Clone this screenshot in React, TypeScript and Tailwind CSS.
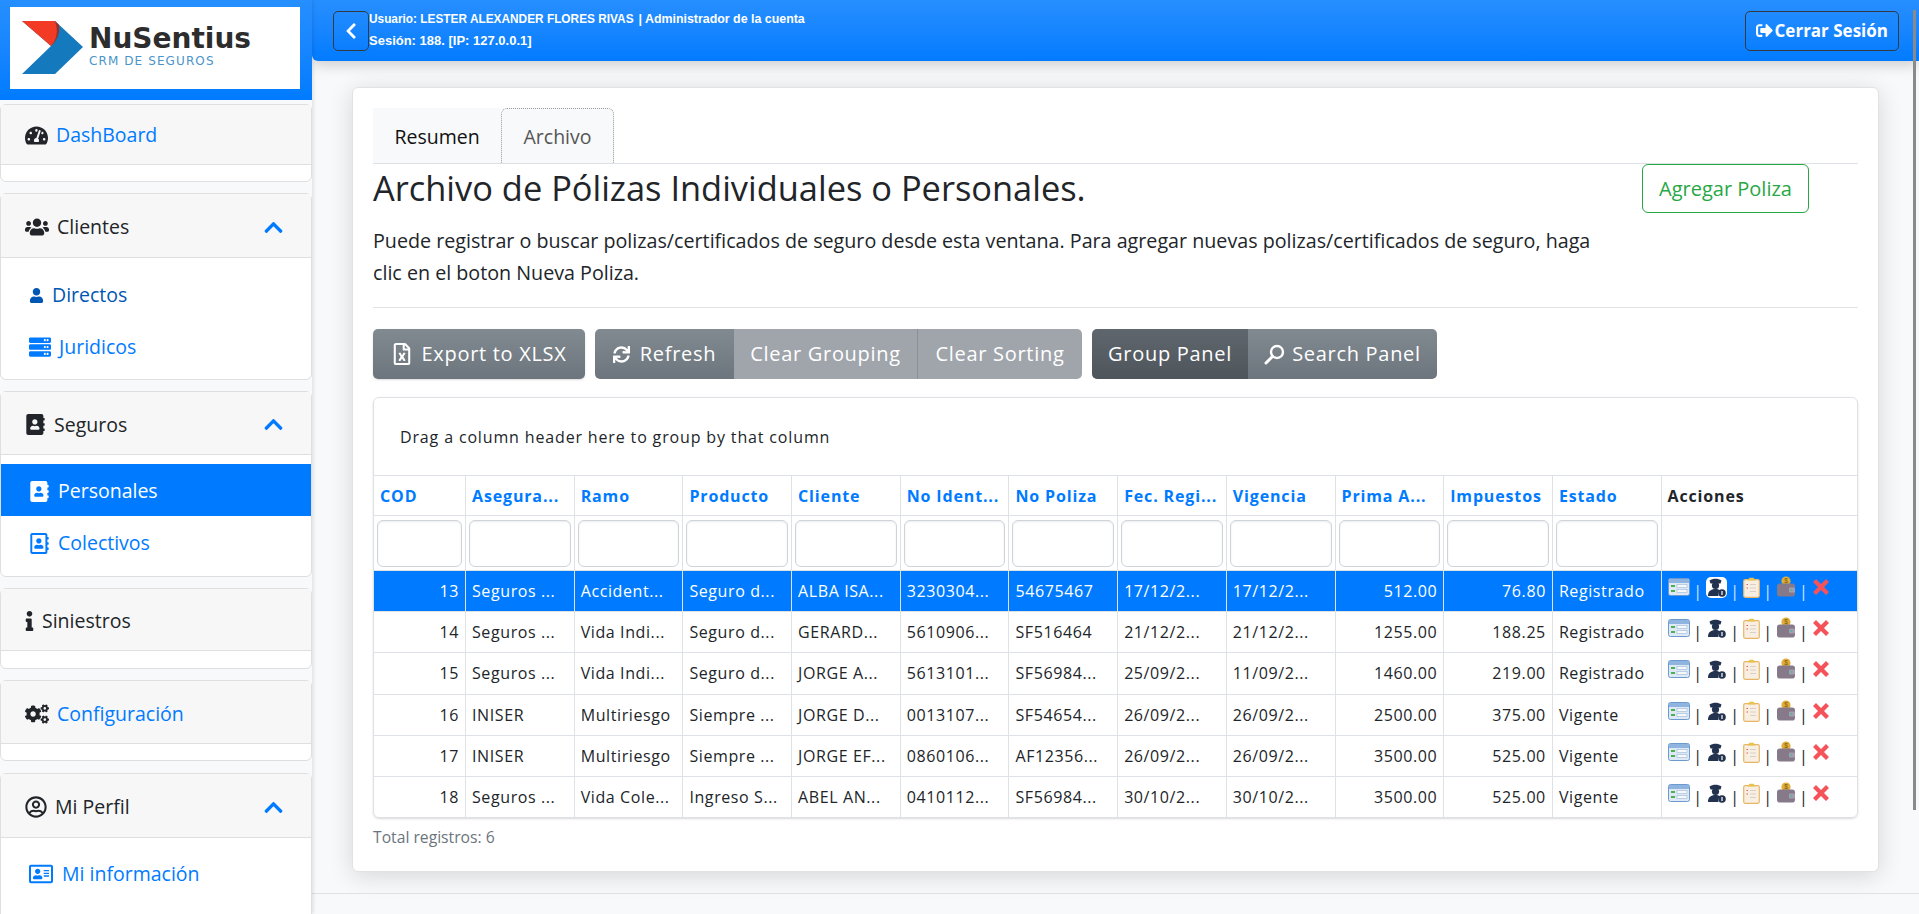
import React from "react";
import {
  FaTachometerAlt, FaUsers, FaUser, FaServer, FaAddressBook, FaRegAddressBook, FaInfo, FaCogs,
  FaRegUserCircle, FaRegAddressCard, FaChevronUp, FaChevronLeft, FaSignOutAlt, FaRegFileExcel, FaSync,
} from "react-icons/fa";

const FONT = "font-['Open_Sans','Noto_Sans',sans-serif]";

function Logo() {
  return (
    <div className="flex h-[82px] w-[290px] items-center bg-white pl-[12px]">
      <svg width="62" height="54" viewBox="0 0 62 54" className="shrink-0">
        <path d="M0 0H33L61 26L33 53H0L29 25Z" fill="#1479bd" />
        <path d="M0 0H33C36 8 36 18 29 25Z" fill="#f33a24" />
        <path d="M29 25C36 18 36 8 33 0L37 4C38 12 35 20 29 25Z" fill="#a82a1c" />
      </svg>
      <div className="ml-[5px] -mt-[3px] flex flex-col">
        <span className="font-['DejaVu_Sans',sans-serif] text-[28px] leading-[30px] font-bold text-[#2d2d2d]">NuSentius</span>
        <span className="font-['DejaVu_Sans',sans-serif] text-[12px] leading-[15px] tracking-[1.1px] text-[#4a94c8]">CRM DE SEGUROS</span>
      </div>
    </div>
  );
}

function SideCard({ icon, title, link, open, mb, headH, children, bodyH, pt = "pt-[3px]" }: { icon: React.ReactNode; title: string; link?: boolean; open?: boolean; mb: string; headH: string; bodyH?: string; children?: React.ReactNode; pt?: string }) {
  return (
    <div className={`${mb} rounded-[6px] border border-[#dfdfdf] bg-white`}>
      <div className={`${headH} ${pt} flex items-center justify-between border-b border-[#dfdfdf] bg-[#f7f7f7] pr-[27px] pl-[24px]`}>
        <div className="flex items-center gap-[8px]">
          <span className="flex items-center text-[#212529]">{icon}</span>
          <span className={`text-[19.5px] ${link ? "text-[#007bff]" : "text-[#212529]"}`}>{title}</span>
        </div>
        {open && <FaChevronUp className="text-[21px] text-[#007bff]" />}
      </div>
      <div className={bodyH}>{children}</div>
    </div>
  );
}

function SideItem({ icon, label, active, dark, gap = "gap-[8px]" }: { icon: React.ReactNode; label: string; active?: boolean; dark?: boolean; gap?: string }) {
  return (
    <div className={`flex h-[52px] items-center ${gap} pt-[2px] pl-[28px] text-[19.5px] ${active ? "bg-[#007bff] text-white" : dark ? "text-[#0056b3]" : "text-[#007bff]"}`}>
      <span className="flex items-center">{icon}</span>
      <span>{label}</span>
    </div>
  );
}

function CardIcon() {
  return (
    <svg width="22" height="18" viewBox="0 0 22 18">
      <rect x="0.5" y="0.5" width="21" height="17" rx="2" fill="#dfe9f5" stroke="#6d9ace" />
      <rect x="1" y="1" width="20" height="4" fill="#8fb4e0" />
      <rect x="3" y="7" width="4" height="2" fill="#4caf50" />
      <rect x="3" y="12" width="4" height="2" fill="#4caf50" />
      <rect x="9" y="6.5" width="10" height="3" fill="#f5f9fd" stroke="#9db8d4" strokeWidth="0.6" />
      <rect x="9" y="11.5" width="10" height="3" fill="#f5f9fd" stroke="#9db8d4" strokeWidth="0.6" />
    </svg>
  );
}
function AgentIcon({ selected }: { selected?: boolean }) {
  return (
    <span className={`flex h-[21px] w-[21px] items-center justify-center rounded-[5px] ${selected ? "bg-white" : ""}`}>
      <svg width="19" height="19" viewBox="0 0 19 19">
        <path d="M2.5 2.5C6 0 11 0 14.5 2.5L13.5 5.5H3.5Z" fill="#22324f" />
        <circle cx="8.5" cy="7.5" r="3.6" fill="#22324f" />
        <path d="M1 18C1 13 4 11 8.5 11C11 11 12 11.5 13 12.5C11 14 11 16.5 11.5 18Z" fill="#22324f" />
        <circle cx="15" cy="15" r="3.8" fill="#22324f" />
        <rect x="14.4" y="13" width="1.2" height="4" fill="#fff" />
      </svg>
    </span>
  );
}
function ClipIcon() {
  return (
    <svg width="17" height="21" viewBox="0 0 17 21">
      <rect x="0.7" y="2.7" width="15.6" height="17.6" rx="1.5" fill="#f8efe2" stroke="#e8b566" strokeWidth="1.2" />
      <path d="M4.5 3.5L6.5 0.8H10.5L12.5 3.5Z" fill="#e8c14f" />
      <path d="M3.5 7.5H5M3.5 11H5" stroke="#e45b55" strokeWidth="1.2" />
      <path d="M7 7.5H13M7 11H13M7 14.5H13" stroke="#d8d0c8" strokeWidth="1" />
    </svg>
  );
}
function WalletIcon() {
  return (
    <svg width="20" height="21" viewBox="0 0 20 21">
      <circle cx="10" cy="5" r="4.6" fill="#e0ad3a" />
      <text x="10" y="7.4" fontSize="6.5" textAnchor="middle" fill="#7a5a10" fontFamily="Liberation Sans">$</text>
      <rect x="1" y="7.5" width="18" height="13" rx="2.8" fill="#85798a" />
      <rect x="13" y="11.5" width="6" height="5" rx="1" fill="#a89dac" />
      <circle cx="15.5" cy="14" r="1" fill="#3dbfa5" />
    </svg>
  );
}
function XIcon() {
  return (
    <svg width="18" height="18" viewBox="0 0 18 18">
      <path d="M4 1L9 6L14 1L17 4L12 9L17 14L14 17L9 12L4 17L1 14L6 9L1 4Z" fill="#f4535a" />
    </svg>
  );
}
function SearchGlyph() {
  return (
    <svg width="21" height="21" viewBox="0 0 21 21" fill="none" stroke="#fff">
      <circle cx="13" cy="8" r="6" strokeWidth="2.4" />
      <path d="M8.5 12.5L2 19" strokeWidth="3" strokeLinecap="round" />
    </svg>
  );
}

function Actions({ selected }: { selected?: boolean }) {
  const sep = <span className={`${selected ? "text-[#cfe4ff]" : "text-[#212529]"} mt-[8px] text-[16px] leading-[24px]`}>|</span>;
  return (
    <div className="flex items-start gap-[3.6px] pl-[6px]">
      <span className="mt-[7px]"><CardIcon /></span>
      {sep}
      <span className="mt-[6px]"><AgentIcon selected={selected} /></span>
      {sep}
      <span className="mt-[6px]"><ClipIcon /></span>
      {sep}
      <span className="mt-[5px]"><WalletIcon /></span>
      {sep}
      <span className="mt-[7px]"><XIcon /></span>
    </div>
  );
}

const heads = ["COD", "Asegura...", "Ramo", "Producto", "Cliente", "No Ident...", "No Poliza", "Fec. Regi...", "Vigencia", "Prima A...", "Impuestos", "Estado"];
const rows = [
  ["13", "Seguros ...", "Accident...", "Seguro d...", "ALBA ISA...", "3230304...", "54675467", "17/12/2...", "17/12/2...", "512.00", "76.80", "Registrado"],
  ["14", "Seguros ...", "Vida Indi...", "Seguro d...", "GERARD...", "5610906...", "SF516464", "21/12/2...", "21/12/2...", "1255.00", "188.25", "Registrado"],
  ["15", "Seguros ...", "Vida Indi...", "Seguro d...", "JORGE A...", "5613101...", "SF56984...", "25/09/2...", "11/09/2...", "1460.00", "219.00", "Registrado"],
  ["16", "INISER", "Multiriesgo", "Siempre ...", "JORGE D...", "0013107...", "SF54654...", "26/09/2...", "26/09/2...", "2500.00", "375.00", "Vigente"],
  ["17", "INISER", "Multiriesgo", "Siempre ...", "JORGE EF...", "0860106...", "AF12356...", "26/09/2...", "26/09/2...", "3500.00", "525.00", "Vigente"],
  ["18", "Seguros ...", "Vida Cole...", "Ingreso S...", "ABEL AN...", "0410112...", "SF56984...", "30/10/2...", "30/10/2...", "3500.00", "525.00", "Vigente"],
];
const RIGHT = new Set([0, 9, 10]);
const GRID = "grid grid-cols-[92px_repeat(11,108.7px)_1fr]";

function Btn({ children, cls }: { children: React.ReactNode; cls: string }) {
  return <div className={`flex h-full items-center justify-center text-[20px] tracking-[0.7px] text-white ${cls}`}>{children}</div>;
}

export default function App() {
  return (
    <div className={`${FONT} relative flex h-[914px] w-full overflow-hidden bg-[#f8f9fa] text-[#212529]`}>
      <aside className="z-10 w-[312px] shrink-0 bg-[#f8f9fa] shadow-[1px_0_4px_rgba(0,0,0,0.12)]">
        <div className="h-[100px] bg-gradient-to-b from-[#268fff] to-[#007bff] px-[10px] pt-[7px]">
          <Logo />
        </div>
        <div className="pt-[4px]">
          <SideCard icon={<FaTachometerAlt className="text-[23px]" />} title="DashBoard" link mb="mb-[11px]" headH="h-[60px]" bodyH="h-[16px]" pt="pt-[1px]" />
          <SideCard icon={<FaUsers className="text-[24px]" />} title="Clientes" open mb="mb-[11px]" headH="h-[64px]" bodyH="h-[121px]">
            <div className="pt-[10px]">
              <SideItem icon={<FaUser className="text-[15px] text-[#0056b3]" />} label="Directos" dark />
              <SideItem icon={<FaServer className="text-[22px]" />} label="Juridicos" />
            </div>
          </SideCard>
          <SideCard icon={<FaAddressBook className="text-[21px]" />} title="Seguros" open mb="mb-[11px]" headH="h-[63px]" bodyH="h-[121px]">
            <div className="pt-[9px]">
              <SideItem icon={<FaAddressBook className="text-[21px]" />} label="Personales" active />
              <SideItem icon={<FaRegAddressBook className="text-[21px]" />} label="Colectivos" />
            </div>
          </SideCard>
          <SideCard icon={<FaInfo className="w-[9px] text-[20px]" />} title="Siniestros" mb="mb-[11px]" headH="h-[62px]" bodyH="h-[17px]" />
          <SideCard icon={<FaCogs className="text-[24px]" />} title="Configuración" link mb="mb-[12px]" headH="h-[63px]" bodyH="h-[16px]" />
          <SideCard icon={<FaRegUserCircle className="text-[22px]" />} title="Mi Perfil" open mb="mb-0" headH="h-[64px]" bodyH="h-[120px]">
            <div className="pt-[9px]">
              <SideItem icon={<FaRegAddressCard className="text-[24px]" />} label="Mi información" gap="gap-[9px]" />
            </div>
          </SideCard>
        </div>
      </aside>

      <main className="relative flex min-w-0 flex-1 flex-col">
        <header className="flex h-[61px] items-center justify-between rounded-bl-[6px] bg-gradient-to-b from-[#268fff] to-[#007bff] pr-[20px] pl-[21px] shadow-[0_4px_14px_rgba(0,0,0,0.18)]">
          <div className="flex items-center">
            <div className="flex h-[40px] w-[36px] items-center justify-center rounded-[5px] border border-[#343a40] text-[18px] text-white">
              <FaChevronLeft />
            </div>
            <div className="font-['Liberation_Sans',sans-serif] leading-[21px] font-bold text-white">
              <div className="-mt-[1px] flex items-baseline">
                <span className="text-[11.85px]">Usuario: LESTER ALEXANDER FLORES RIVAS</span>
                <span className="ml-[5px] text-[12.4px]">| Administrador de la cuenta</span>
              </div>
              <div className="text-[13px]">Sesión: 188. [IP: 127.0.0.1]</div>
            </div>
          </div>
          <div className="flex h-[40px] items-center gap-[2px] rounded-[5px] border border-[#343a40] px-[10px] text-[17px] font-bold text-white">
            <FaSignOutAlt /> Cerrar Sesión
          </div>
        </header>

        <div className="flex-1 pt-[26px] pr-[40px] pl-[40px]">
          <section className="h-[785px] rounded-[6px] border border-[#e2e2e2] bg-white px-[20px] pt-[20px] shadow-[0_4px_24px_rgba(0,0,0,0.14)]">
            <div className="flex h-[56px] items-end border-b border-[#dee2e6]">
              <div className="flex h-full w-[128px] items-center justify-center bg-[#f8f9fa] pt-[2px] text-[19.5px] text-[#111]">Resumen</div>
              <div className="flex h-full w-[113px] items-center justify-center rounded-t-[6px] border border-b-0 border-dotted border-[#999] bg-[#f8f9fa] pt-[2px] text-[19.5px] text-[#555]">Archivo</div>
            </div>

            <div className="flex items-start justify-between">
              <div className="w-[1240px]">
                <h2 className="text-[34.4px] leading-[48px] font-normal">Archivo de Pólizas Individuales o Personales.</h2>
                <p className="mt-[13px] text-[19.7px] leading-[32px]">
                  Puede registrar o buscar polizas/certificados de seguro desde esta ventana. Para agregar nuevas polizas/certificados de seguro, haga clic en el boton Nueva Poliza.
                </p>
              </div>
              <div className="mr-[49px] flex h-[49px] w-[167px] items-center justify-center rounded-[6px] border border-[#28a745] text-[20px] text-[#28a745]">Agregar Poliza</div>
            </div>

            <div className="mt-[18px] border-t border-[#e3e3e3] pt-[21px]">
              <div className="flex h-[50px] gap-[10px]">
                <div className="w-[212px] overflow-hidden rounded-[5px] shadow-[0_1px_2px_rgba(0,0,0,0.15)]">
                  <Btn cls="gap-[8px] bg-gradient-to-b from-[#828a91] to-[#6c757d]"><FaRegFileExcel className="text-[22px]" />Export to XLSX</Btn>
                </div>
                <div className="flex w-[487px] overflow-hidden rounded-[5px]">
                  <Btn cls="w-[139px] gap-[10px] bg-gradient-to-b from-[#828a91] to-[#6c757d]"><FaSync className="text-[17px]" />Refresh</Btn>
                  <Btn cls="w-[184px] border-r border-[#8b9198] bg-[#a0a5ab]">Clear Grouping</Btn>
                  <Btn cls="w-[164px] bg-[#a0a5ab]">Clear Sorting</Btn>
                </div>
                <div className="flex w-[345px] overflow-hidden rounded-[5px]">
                  <Btn cls="w-[156px] bg-gradient-to-b from-[#5f666d] to-[#4e555b]">Group Panel</Btn>
                  <Btn cls="w-[189px] gap-[7px] bg-gradient-to-b from-[#828a91] to-[#6c757d]"><SearchGlyph />Search Panel</Btn>
                </div>
              </div>

              <div className="mt-[18px] overflow-hidden rounded-[6px] border border-[#dee2e6] shadow-[0_1px_2px_rgba(0,0,0,0.15)]">
                <div className="flex h-[77px] items-center pl-[26px] text-[16px] tracking-[0.85px]">Drag a column header here to group by that column</div>
                <div className={`${GRID} h-[40px] border-t border-[#dee2e6]`}>
                  {heads.map((h) => (
                    <div key={h} className="flex items-center overflow-hidden border-r border-[#dee2e6] px-[6px] text-[16px] font-bold tracking-[0.85px] whitespace-nowrap text-[#007bff]">{h}</div>
                  ))}
                  <div className="flex items-center px-[6px] text-[16px] font-bold tracking-[0.85px] text-[#212529]">Acciones</div>
                </div>
                <div className={`${GRID} h-[55px] border-t border-[#dee2e6]`}>
                  {heads.map((h) => (
                    <div key={h} className="border-r border-[#dee2e6] px-[3px] py-[4px]">
                      <div className="h-[47px] rounded-[6px] border border-[#ced4da] bg-white shadow-[inset_0_1px_2px_rgba(0,0,0,0.08)]" />
                    </div>
                  ))}
                  <div />
                </div>
                {rows.map((r, i) => (
                  <div key={r[0]} className={`${GRID} h-[41.2px] border-t border-[#dee2e6] ${i === 0 ? "bg-[#007bff] text-white" : ""}`}>
                    {r.map((c, j) => (
                      <div key={j} className={`flex items-center overflow-hidden border-r border-[#dee2e6] px-[6px] text-[16px] tracking-[0.6px] whitespace-nowrap ${RIGHT.has(j) ? "justify-end" : ""}`}>{c}</div>
                    ))}
                    <Actions selected={i === 0} />
                  </div>
                ))}
              </div>
              <div className="mt-[8px] text-[15.7px] text-[#6c757d]">Total registros: 6</div>
            </div>
          </section>
          <div className="mt-[21px] -mr-[40px] -ml-[40px] border-t border-[#dee2e6]" />
        </div>
        <div className="absolute top-[10px] right-[3px] z-20 h-[800px] w-[3px] bg-[#8a8a8a]" />
      </main>
    </div>
  );
}
